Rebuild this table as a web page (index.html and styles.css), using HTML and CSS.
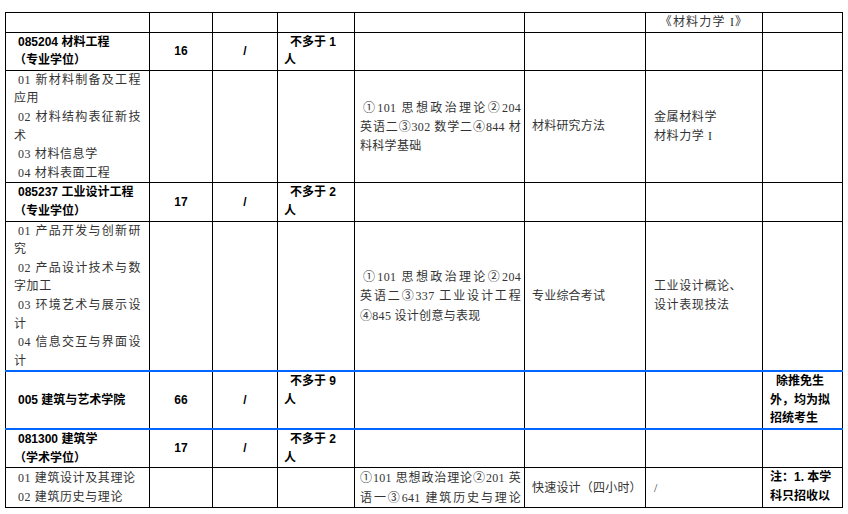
FILE: index.html
```html
<!DOCTYPE html>
<html lang="zh-CN">
<head>
<meta charset="utf-8">
<title>招生目录</title>
<link rel="stylesheet" href="styles.css">
</head>
<body>
<div class="page">
<table class="grid">
  <colgroup>
    <col class="w1"><col class="w2"><col class="w3"><col class="w4">
    <col class="w5"><col class="w6"><col class="w7"><col class="w8">
  </colgroup>
  <tr class="r-thin">
    <td></td><td></td><td></td><td></td><td></td><td></td>
    <td class="ctr wide">《材料力学 I》</td><td></td>
  </tr>
  <tr class="r-head">
    <td class="b c1">085204 材料工程<br>（专业学位）</td>
    <td class="b ctr">16</td>
    <td class="b ctr">/</td>
    <td class="b top c4">不多于 1<br>人</td>
    <td></td><td></td><td></td><td></td>
  </tr>
  <tr class="r-items6">
    <td class="c1">
      <p class="item">01 新材料制备及工程应用</p>
      <p class="item">02 材料结构表征新技术</p>
      <p class="item">03 材料信息学</p>
      <p class="item">04 材料表面工程</p>
    </td>
    <td></td><td></td><td></td>
    <td class="c5">
      <span class="ln j ind"><span class="cn">①</span>101 思想政治理论<span class="cn">②</span>204</span>
      <span class="ln j">英语二<span class="cn">③</span>302 数学二<span class="cn">④</span>844 材</span>
      <span class="ln">料科学基础</span>
    </td>
    <td class="c6">材料研究方法</td>
    <td class="c7">金属材料学<br>材料力学 I</td>
    <td></td>
  </tr>
  <tr class="r-head">
    <td class="b c1">085237 工业设计工程<br>（专业学位）</td>
    <td class="b ctr">17</td>
    <td class="b ctr">/</td>
    <td class="b top c4">不多于 2<br>人</td>
    <td></td><td></td><td></td><td></td>
  </tr>
  <tr class="r-items8">
    <td class="c1">
      <p class="item">01 产品开发与创新研究</p>
      <p class="item">02 产品设计技术与数字加工</p>
      <p class="item">03 环境艺术与展示设计</p>
      <p class="item">04 信息交互与界面设计</p>
    </td>
    <td></td><td></td><td></td>
    <td class="c5">
      <span class="ln j ind"><span class="cn">①</span>101 思想政治理论<span class="cn">②</span>204</span>
      <span class="ln j">英语二<span class="cn">③</span>337 工业设计工程</span>
      <span class="ln"><span class="cn">④</span>845 设计创意与表现</span>
    </td>
    <td class="c6">专业综合考试</td>
    <td class="c7">工业设计概论、<br>设计表现技法</td>
    <td></td>
  </tr>
  <tr class="r-sect">
    <td class="b c1">005 建筑与艺术学院</td>
    <td class="b ctr">66</td>
    <td class="b ctr">/</td>
    <td class="b top c4">不多于 9<br>人</td>
    <td></td><td></td><td></td>
    <td class="b top c8 ind">除推免生<br>外，均为拟<br>招统考生</td>
  </tr>
  <tr class="r-head">
    <td class="b c1">081300 建筑学<br>（学术学位）</td>
    <td class="b ctr">17</td>
    <td class="b ctr">/</td>
    <td class="b top c4">不多于 2<br>人</td>
    <td></td><td></td><td></td><td></td>
  </tr>
  <tr class="r-head">
    <td class="c1">
      <p class="item">01 建筑设计及其理论</p>
      <p class="item">02 建筑历史与理论</p>
    </td>
    <td></td><td></td><td></td>
    <td class="c5">
      <span class="ln j"><span class="cn">①</span>101 思想政治理论<span class="cn">②</span>201 英</span>
      <span class="ln j">语一<span class="cn">③</span>641 建筑历史与理论</span>
    </td>
    <td class="c6">快速设计（四小时）</td>
    <td class="c7">/</td>
    <td class="b top c8">注：1. 本学<br>科只招收以</td>
  </tr>
</table>
</div>
</body>
</html>
```

FILE: styles.css
```css
html, body {
  margin: 0;
  padding: 0;
  background: #ffffff;
}

.page {
  padding: 12px 0 0 5px;
}

.grid {
  border-collapse: collapse;
  table-layout: fixed;
  width: 838px;
  font-family: "Liberation Serif", "Noto Sans CJK SC", serif;
  font-size: 12px;
  line-height: 18.6px;
  letter-spacing: 0.6px;
  color: #333333;
}

.w1 { width: 144px; }
.w2 { width: 63px; }
.w3 { width: 65px; }
.w4 { width: 77px; }
.w5 { width: 170px; }
.w6 { width: 121px; }
.w7 { width: 117px; }
.w8 { width: 80px; }

.grid td {
  border: 1px solid #000000;
  padding: 0 7px;
  vertical-align: middle;
  overflow: hidden;
}

.r-thin { height: 18px; }
.r-head { height: 37px; }
.r-items6 { height: 112px; }
.r-items8 { height: 150px; }
.r-sect { height: 56px; }

.r-sect td {
  border-top: 2px solid #0066ff;
  border-bottom: 2px solid #0066ff;
}

.b {
  font-family: "Liberation Sans", "Noto Sans CJK SC", sans-serif;
  font-weight: 700;
  color: #000000;
  letter-spacing: 0;
}

.cn {
  font-family: "Noto Sans CJK SC", sans-serif;
}

.ctr { text-align: center; }
.top { vertical-align: top !important; }

.wide { letter-spacing: 1.2px; }

.grid td.c1 {
  padding: 0 8px;
  text-indent: 4px;
}

.item {
  margin: 0;
  text-align: justify;
  text-indent: 4px;
}

.grid td.c4 {
  padding: 0 4px 0 6px;
  text-indent: 6px;
}

.grid td.c5 {
  padding: 0 3px 0 5px;
  letter-spacing: 0.3px;
}

.ln {
  display: block;
}

.j {
  text-align: justify;
  text-align-last: justify;
}

.ln.ind {
  text-indent: 3px;
}

.grid td.c6 {
  padding: 0 2px 0 7px;
  letter-spacing: 0.2px;
}

.grid td.c7 { padding: 0 8px; }

.grid td.c8 {
  padding: 0 5px 0 7px;
}

.grid td.c8.ind {
  text-indent: 6px;
}
```
